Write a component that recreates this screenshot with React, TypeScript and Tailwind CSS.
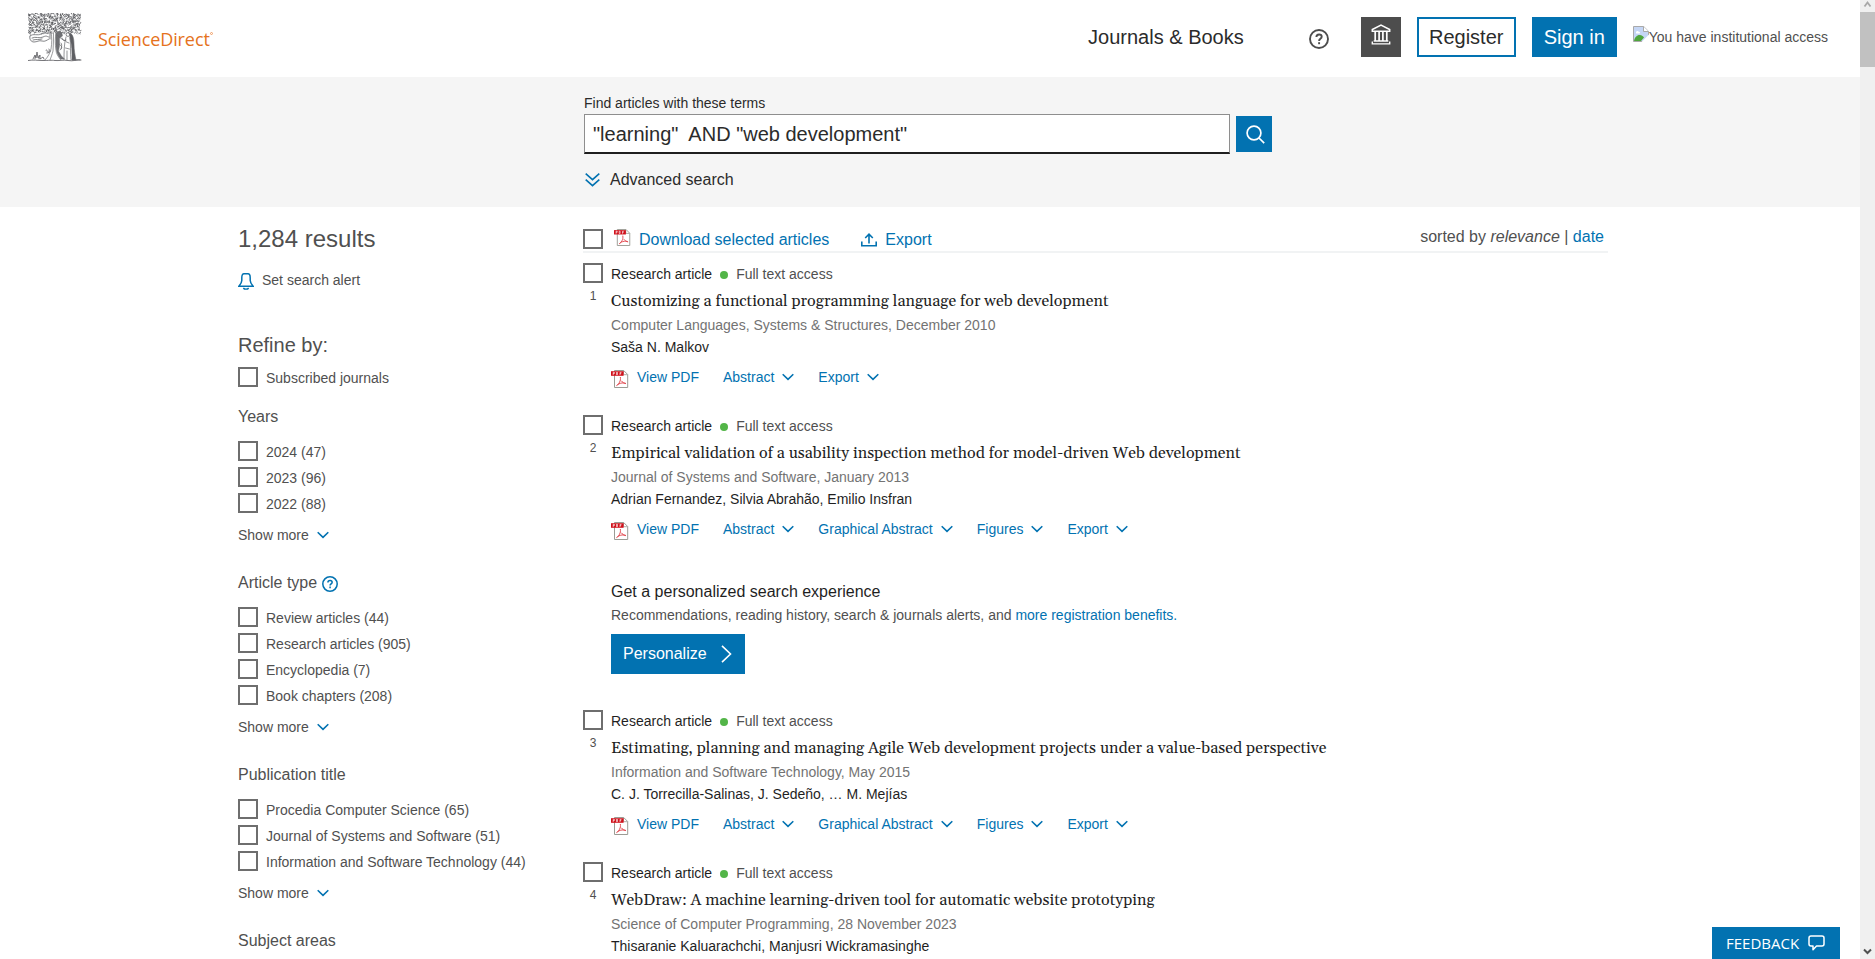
import type { ReactNode } from "react";

type Facet = { title: string; help?: boolean; options: string[] };
type Article = { n: number; title: string; journal: string; authors: string; actions: string[] };

const facets: Facet[] = [
  { title: "Years", options: ["2024 (47)", "2023 (96)", "2022 (88)"] },
  {
    title: "Article type",
    help: true,
    options: ["Review articles (44)", "Research articles (905)", "Encyclopedia (7)", "Book chapters (208)"],
  },
  {
    title: "Publication title",
    options: [
      "Procedia Computer Science (65)",
      "Journal of Systems and Software (51)",
      "Information and Software Technology (44)",
    ],
  },
];

const articles: Article[] = [
  {
    n: 1,
    title: "Customizing a functional programming language for web development",
    journal: "Computer Languages, Systems & Structures, December 2010",
    authors: "Saša N. Malkov",
    actions: ["Abstract", "Export"],
  },
  {
    n: 2,
    title: "Empirical validation of a usability inspection method for model-driven Web development",
    journal: "Journal of Systems and Software, January 2013",
    authors: "Adrian Fernandez, Silvia Abrahão, Emilio Insfran",
    actions: ["Abstract", "Graphical Abstract", "Figures", "Export"],
  },
  {
    n: 3,
    title: "Estimating, planning and managing Agile Web development projects under a value-based perspective",
    journal: "Information and Software Technology, May 2015",
    authors: "C. J. Torrecilla-Salinas, J. Sedeño, … M. Mejías",
    actions: ["Abstract", "Graphical Abstract", "Figures", "Export"],
  },
  {
    n: 4,
    title: "WebDraw: A machine learning-driven tool for automatic website prototyping",
    journal: "Science of Computer Programming, 28 November 2023",
    authors: "Thisaranie Kaluarachchi, Manjusri Wickramasinghe",
    actions: ["Abstract", "Export"],
  },
];

// Short curled strokes on a jittered grid form the engraved foliage.
function foliage(start: number, step: number): string {
  let seed = start;
  const rnd = () => {
    seed = (seed * 16807) % 2147483647;
    return seed / 2147483647;
  };
  let d = "";
  for (let y = 1.2; y < 20; y += step) {
    for (let x = 1.2; x < 53; x += step) {
      const px = x + rnd() * 1.4 - 0.7;
      const py = y + rnd() * 1.2 - 0.6;
      const a = rnd() * 6.28;
      const dx = Math.cos(a) * 1.3;
      const dy = Math.sin(a) * 1.3;
      d += `M${px.toFixed(1)} ${py.toFixed(1)}q${(dx - dy).toFixed(1)} ${(dy + dx).toFixed(1)} ${(dx * 1.4).toFixed(1)} ${(dy * 1.4).toFixed(1)}`;
    }
  }
  return d;
}

const TreeLogo = () => (
  <svg width="54" height="49" viewBox="0 0 54 49" fill="none" stroke="#66676b" strokeLinecap="round">
    <path d={foliage(77, 2.6)} stroke="#a5a6a9" strokeWidth="0.8" />
    <path d={foliage(11, 2.2)} stroke="#55565a" strokeWidth="0.85" />
    <path d="M2 23c3-3 8 0 11-2s6 0 9-1M2 23c-1 3 1 6 4 6s5-2 8-1 5-1 7-2M4 25c4-2 7 1 11-1s4 0 6 0M5 27c3-1 6 0 9-1M22 21v5" strokeWidth="0.8" />
    <path d="M23 19c1 6 1 11 0 17-1 4-3 8-6 11M28 20c-1 5-1 11 0 17 0 3 2 7 5 10M25.500 20c0 6 0 12-.500 18-1 4-2 6-3 9" strokeWidth="0.65" />
    <path d="M28 20c2-2 5-2 6 0l.5 3-3 2 0 8-1 5 3 5 3 3h-4c-3-4-4.500-8-4.500-13z" fill="#6f7074" strokeWidth="0.4" />
    <path d="M42 20c3 1 4 6 4 11 0 6 1 11 2 16h-4c0-8 0-15-2-21z" fill="#5d5e62" strokeWidth="0.5" />
    <path d="M29 22c3 3 6 5 9 6M31 31c3 2 4 4 1 6M34 25c1 3 2 3 4 2M33 36c1-3 1-5 0-6" strokeWidth="0.75" />
    <circle cx="40" cy="21.500" r="1.900" strokeWidth="0.8" />
    <path d="M38 24c-2 7-2 15-2 23M42 24c1 7 0 15 1 23M38.500 29l2.500 1M37.500 35l4 1M39 38v9" strokeWidth="0.7" />
    <path d="M18 37c1-1 2 2 1 3M21 36c1 1 0 3-1 4M22.500 38l-2 2" strokeWidth="0.9" />
    <path d="M5 46l2-4 1 3 1-6 1 6 2-3v4l3-2 1 2M7 46v-3M11 46v-3" strokeWidth="0.9" />
    <path d="M0 47.500c6-1 9 0 15 0s8-.5 12 0 8-1 13 0 9-1 13-.5M44 46.800h8" strokeWidth="0.9" />
  </svg>
);

const HelpIcon = ({ size, color }: { size: number; color: string }) => (
  <svg width={size} height={size} viewBox="0 0 20 20" fill="none" stroke={color} strokeWidth="1.900">
    <circle cx="10" cy="10" r="9" />
    <path d="M7.400 8.100c0-1.600 1.100-2.600 2.700-2.600s2.600.9 2.600 2.300c0 2-2.600 2.100-2.600 4.100" />
    <path d="M10.100 13.200v2" />
  </svg>
);

const InstitutionIcon = () => (
  <svg width="20" height="21" viewBox="0 0 20 21" fill="none" stroke="#fff">
    <path d="M1.300 7.200V5.500L10 1.100l8.700 4.400v1.700z" strokeWidth="1.500" />
    <path d="M4.200 8v9M8.100 8v9M11.900 8v9M15.800 8v9" strokeWidth="1.700" />
    <path d="M2.700 17h14.600M1.300 17.600v2.300h17.400v-2.300" strokeWidth="1.400" />
  </svg>
);

const MissingImage = () => (
  <svg width="16" height="16" viewBox="0 0 16 16">
    <path d="M.5.5h10.200l4.800 4.800v10.200H.5z" fill="#c5d6f5" stroke="#a9a9a9" />
    <path d="M3 6.500c0-1.500 2-2 2.800-.8 1.300-.2 1.700 1.600.5 1.800H3.500C3 7.500 3 7 3 6.500z" fill="#fff" />
    <path d="M1 15c.5-3.500 3-6 5.500-6 2.500 0 4 1.500 4.500 2.500L8 15z" fill="#4fa63c" />
    <path d="M16 8.500V16H8.500z" fill="#fff" />
    <path d="M10.500.5v5h5" fill="#fff" stroke="#a9a9a9" />
  </svg>
);

const Chevron = () => (
  <svg width="12" height="8" viewBox="0 0 12 8" fill="none" stroke="#0272b1" strokeWidth="1.600">
    <path d="M.7 1.200 6 6.400l5.300-5.200" />
  </svg>
);

const PdfIcon = ({ size }: { size: number }) => (
  <svg width={size} height={size} viewBox="0 0 18 18" fill="none">
    <path d="M3.500.5h9.200l4 4v13H3.500z" fill="#fff" stroke="#9b9b94" />
    <path d="M12.500.7v4h4" stroke="#9b9b94" strokeWidth="0.8" />
    <path d="M0 1.200h12.600v4.600H0z" fill="#d0111b" />
    <path d="M2.200 5V2.300h1.200v1.200H2.200M5.500 2.300V4.700h1V2.300zM9 5V2.400h1.500M9 3.600h1.200" stroke="#fff" strokeWidth="0.65" />
    <path d="M9.300 7c.3 2.300.2 3.500-.8 5.300-.7 1.400-1.800 2.700-2.800 3.300 1-1.400 3-2.300 5.200-2.600 1.700-.3 3.200-.1 4 .6-1.400.2-3.400-1.200-4.500-2.800" stroke="#e2474e" strokeWidth="1" />
  </svg>
);

const Checkbox = () => <span className="block size-5 shrink-0 border-2 border-[#6e6e6e] bg-white" />;

const Link = ({ children }: { children: ReactNode }) => <a className="text-[#0272b1]">{children}</a>;

const ShowMore = () => (
  <div className="mt-2.5 flex h-6 items-center gap-2 text-sm">
    Show more
    <Chevron />
  </div>
);

const Option = ({ label }: { label: string }) => (
  <label className="flex h-5 gap-2 text-sm leading-[22px]">
    <Checkbox />
    {label}
  </label>
);

const FacetGroup = ({ facet }: { facet: Facet }) => (
  <section className="mb-6">
    <h3 className="flex h-6 items-center gap-[5px] text-base">
      {facet.title}
      {facet.help && <span className="mt-0.5"><HelpIcon size={16} color="#0272b1" /></span>}
    </h3>
    <div className="mt-3 flex flex-col gap-1.5">
      {facet.options.map((o) => <Option key={o} label={o} />)}
    </div>
    <ShowMore />
  </section>
);

const ArticleItem = ({ a }: { a: Article }) => (
  <article className="flex h-[152px] shrink-0 gap-2">
    <div className="flex w-5 shrink-0 flex-col items-center">
      <Checkbox />
      <span className="mt-[5px] text-xs leading-[17px] text-[#505050]">{a.n}</span>
    </div>
    <div className="text-sm text-[#1f1f1f]">
      <div className="flex h-[22px] items-center">
        Research article
        <span className="mt-0.5 ml-2 size-2 rounded-full bg-[#53b548]" />
        <span className="ml-2 text-[#505050]">Full text access</span>
      </div>
      <h2 className="mt-1 font-[Gelasio,'Liberation_Serif',serif] text-base leading-6">{a.title}</h2>
      <div className="mt-0.5 leading-5 text-[#737373]">{a.journal}</div>
      <div className="mt-0.5 leading-5">{a.authors}</div>
      <div className="mt-2.5 flex h-5 items-center gap-6 text-[#0272b1]">
        <span className="flex items-center gap-2">
          <span className="mt-1"><PdfIcon size={18} /></span>
          View PDF
        </span>
        {a.actions.map((x) => (
          <span key={x} className="flex items-center gap-2">
            {x}
            <Chevron />
          </span>
        ))}
      </div>
    </div>
  </article>
);

const Promo = () => (
  <section className="flex h-[143px] shrink-0 flex-col items-start pt-[13px] pl-7">
    <h3 className="text-base leading-6 text-[#1f1f1f]">Get a personalized search experience</h3>
    <p className="mt-px text-sm leading-5 text-[#505050]">
      Recommendations, reading history, search &amp; journals alerts, and <Link>more registration benefits.</Link>
    </p>
    <button className="mt-[9px] flex h-10 w-[134px] items-center bg-[#0272b1] pl-3 text-base text-white">
      Personalize
      <svg className="ml-3.5" width="11" height="18" viewBox="0 0 11 18" fill="none" stroke="#fff" strokeWidth="1.600">
        <path d="M1 .8 9.500 9 1 17.200" />
      </svg>
    </button>
  </section>
);

const Header = () => (
  <header className="flex h-[77px] shrink-0 items-start pr-8 pl-7 text-xl text-[#2b2b2b]">
    <div className="mt-[13px]"><TreeLogo /></div>
    <div className="mt-[27px] ml-4 flex font-['Open_Sans',sans-serif] text-lg leading-[25px] tracking-[-0.1px] text-[#e57220]">
      ScienceDirect
      <span className="mt-[5px] size-[3px] rounded-full border-[0.5px] border-[#e9711c]/60" />
    </div>
    <nav className="mt-[17px] ml-auto flex h-10 items-center">
      <a>Journals &amp; Books</a>
      <span className="mt-[3px] ml-[65px]"><HelpIcon size={20} color="#4d4d4d" /></span>
      <span className="ml-8 flex size-10 justify-center bg-[#4d4d4d] pt-[7px]"><InstitutionIcon /></span>
      <button className="ml-4 h-10 w-[99px] border-2 border-[#0272b1]">Register</button>
      <button className="ml-4 h-10 w-[85px] bg-[#0272b1] text-white">Sign in</button>
      <span className="ml-4 flex items-center text-sm text-[#505050]">
        <span className="-mt-1.5"><MissingImage /></span>
        You have institutional access
      </span>
    </nav>
  </header>
);

const SearchBand = () => (
  <section className="h-[130px] shrink-0 bg-[#f5f5f5] pt-4 pl-[584px] text-[#2b2b2b]">
    <div className="h-[21px] text-sm leading-5">Find articles with these terms</div>
    <div className="flex items-center gap-1.5">
      <div className="h-10 w-[646px] border border-b-2 border-[#8e8e8e] border-b-[#1f1f1f] bg-white pl-2 text-xl leading-[38px] whitespace-pre">
        {'"learning"  AND "web development"'}
      </div>
      <button className="flex size-9 items-center justify-center bg-[#0272b1] pl-[3px]">
        <svg width="19" height="19" viewBox="0 0 19 19" fill="none" stroke="#fff" strokeWidth="1.700">
          <circle cx="8" cy="8" r="6.900" />
          <path d="m13 13 5.200 5.200" />
        </svg>
      </button>
    </div>
    <div className="mt-3.5 flex h-6 items-center gap-2.5 pl-px text-base">
      <svg width="15" height="14" viewBox="0 0 15 14" fill="none" stroke="#0272b1" strokeWidth="1.600">
        <path d="m.7.7 6.800 6 6.800-6M.7 6.700l6.800 6 6.800-6" />
      </svg>
      Advanced search
    </div>
  </section>
);

const Sidebar = () => (
  <aside className="w-[583px] shrink-0 pl-[238px] whitespace-nowrap text-[#505050]">
    <h1 className="mt-4 text-2xl leading-8">1,284 results</h1>
    <div className="mt-[15px] flex h-5 items-center gap-2 text-sm">
      <svg className="mt-0.5 shrink-0" width="16" height="17" viewBox="0 0 16 17" fill="none" stroke="#0272b1" strokeWidth="1.500">
        <path d="M3.800 7.500V4.700C3.800 2.400 4.500.8 6 .8h4c1.500 0 2.200 1.600 2.200 3.900v2.800c0 2.200 1.200 3.600 2.900 5.700H.9c1.700-2.100 2.900-3.500 2.900-5.700z" />
        <path d="M5.300 15.100c1.400 1.300 4 1.300 5.400 0" />
      </svg>
      Set search alert
    </div>
    <h2 className="mt-[41px] text-xl leading-7">Refine by:</h2>
    <div className="mt-2 mb-[18px]"><Option label="Subscribed journals" /></div>
    {facets.map((f) => <FacetGroup key={f.title} facet={f} />)}
    <h3 className="text-base leading-6">Subject areas</h3>
  </aside>
);

const Toolbar = () => (
  <div className="flex h-[46px] shrink-0 items-start border-b-2 border-[#f1f3f4] text-base text-[#0272b1]">
    <span className="mt-[22px]"><Checkbox /></span>
    <span className="mt-[22px] ml-[11px]"><PdfIcon size={17} /></span>
    <a className="mt-[21px] ml-2 leading-6">Download selected articles</a>
    <svg className="mt-[26px] ml-8" width="16" height="14" viewBox="0 0 16 14" fill="none" stroke="#0272b1" strokeWidth="1.600">
      <path d="M.8 8.500v4.300h14.400V8.500M8 10.500V1.300M4.200 5 8 1.200 11.800 5" />
    </svg>
    <a className="mt-[21px] ml-2 leading-6">Export</a>
    <span className="mt-[18px] mr-1 ml-auto leading-6 text-[#505050]">
      sorted by <i>relevance</i> | <Link>date</Link>
    </span>
  </div>
);

const Scrollbar = () => (
  <div className="flex w-[15px] shrink-0 flex-col items-center bg-[#f0f0f0]">
    <svg width="15" height="12" viewBox="0 0 15 12" fill="none" stroke="#a8a8a8" strokeWidth="1.800">
      <path d="m4.500 6.500 3-4 3 4" />
    </svg>
    <div className="h-[55px] w-full bg-[#c1c1c1]" />
    <svg className="mt-auto" width="15" height="12" viewBox="0 0 15 12" fill="none" stroke="#505050" strokeWidth="2">
      <path d="m4 2.500 3.500 3.500L11 2.500" />
    </svg>
  </div>
);

export default function App() {
  return (
    <div className="relative flex h-[959px] w-[1875px] overflow-hidden bg-white font-['Liberation_Sans',Arial,sans-serif]">
      <div className="flex min-w-0 flex-1 flex-col">
        <Header />
        <SearchBand />
        <div className="flex min-h-0 flex-1 overflow-hidden">
          <Sidebar />
          <main className="flex w-[1025px] shrink-0 flex-col">
            <Toolbar />
            <div className="mt-2.5 flex flex-col">
              <ArticleItem a={articles[0]} />
              <ArticleItem a={articles[1]} />
              <Promo />
              <ArticleItem a={articles[2]} />
              <ArticleItem a={articles[3]} />
            </div>
          </main>
        </div>
      </div>
      <Scrollbar />
      <button className="absolute right-[35px] bottom-0 flex h-8 w-32 items-center gap-[9px] bg-[#0272b1] pl-3.5 font-['Open_Sans',sans-serif] text-[15px] text-white">
        FEEDBACK
        <svg width="17" height="16" viewBox="0 0 17 16" fill="none" stroke="#fff" strokeWidth="1.500" strokeLinejoin="round">
          <path d="M3 1h11c1.300 0 2 .8 2 2v6c0 1.300-.7 2-2 2H8.500L5 14.800V11H3c-1.300 0-2-.7-2-2V3c0-1.200.7-2 2-2z" />
        </svg>
      </button>
    </div>
  );
}
